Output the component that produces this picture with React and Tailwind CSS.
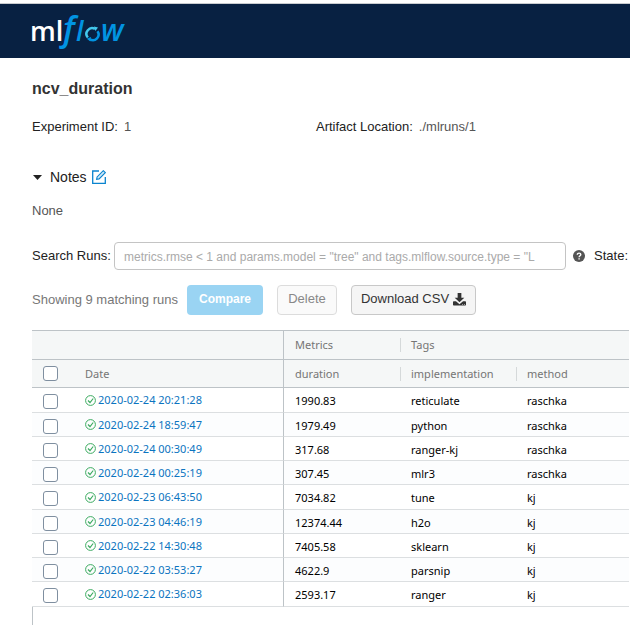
import React from "react";

const runs = [
  ["2020-02-24 20:21:28", "1990.83", "reticulate", "raschka"],
  ["2020-02-24 18:59:47", "1979.49", "python", "raschka"],
  ["2020-02-24 00:30:49", "317.68", "ranger-kj", "raschka"],
  ["2020-02-24 00:25:19", "307.45", "mlr3", "raschka"],
  ["2020-02-23 06:43:50", "7034.82", "tune", "kj"],
  ["2020-02-23 04:46:19", "12374.44", "h2o", "kj"],
  ["2020-02-22 14:30:48", "7405.58", "sklearn", "kj"],
  ["2020-02-22 03:53:27", "4622.9", "parsnip", "kj"],
  ["2020-02-22 02:36:03", "2593.17", "ranger", "kj"],
];

function Logo() {
  return (
    <svg width="110" height="54" viewBox="0 0 110 54" role="img" aria-label="mlflow">
      <g fontFamily="'Open Sans', sans-serif">
        <text x="0" y="37" fontSize="27" fontWeight="600" fill="#fff">ml</text>
        <g fontStyle="italic" fill="#0194e2" fontWeight="600">
          <text x="33" y="37" fontSize="34">f</text>
          <text x="46" y="37" fontSize="27">l</text>
          <text x="71" y="37" fontSize="30">w</text>
        </g>
      </g>
      <g fill="none" strokeWidth="2.5">
        <path d="M57.8 33.500A5.700 5.700 0 0 1 65 24.900" stroke="#43c9ed" />
        <path d="M67.500 27.200A5.700 5.700 0 0 1 60 35.400" stroke="#0194e2" />
      </g>
      <path d="M64 22.500l4 1-2.600 3.600z" fill="#43c9ed" />
      <path d="M61 33l-.6 4.500-3.600-2.800z" fill="#0194e2" />
    </svg>
  );
}

function CheckCircle() {
  return (
    <svg className="shrink-0" width="11" height="11" viewBox="0 0 11 11" fill="none" stroke="#3caa60" aria-hidden="true">
      <circle cx="5.500" cy="5.500" r="4.900" />
      <path d="M3 5.500l2 2 3.200-4" strokeWidth="1.200" />
    </svg>
  );
}

function EditIcon() {
  return (
    <svg width="14" height="14" viewBox="0 0 14 14" fill="none" stroke="#0a84cf" aria-hidden="true">
      <path d="M7 1H.7v12.300h12.600V7" strokeWidth="1.300" />
      <path d="M4.600 9.400l.5-2.500 6.200-6.200 2 2-6.200 6.200z" fill="#cfe9f8" strokeWidth="1.100" />
    </svg>
  );
}

function DownloadIcon() {
  return (
    <svg width="13" height="13" viewBox="0 0 14 14" fill="#333" aria-hidden="true">
      <path d="M5 0h4v5h3.200L7 10 1.800 5H5z" />
      <path d="M.8 9h2.400L7 12 10.800 9h2.400q.8 0 .8.8v2.900q0 .8-.8.8H.8q-.8 0-.8-.8V9.800Q0 9 .8 9z" />
      <path d="M10 11.800h.8v.8H10zM12 11.800h.8v.8H12z" fill="#f5f5f5" />
    </svg>
  );
}

function HelpIcon() {
  return (
    <svg className="shrink-0" width="12" height="12" viewBox="0 0 12 12" role="img" aria-label="Search help">
      <circle cx="6" cy="6" r="6" fill="#555" />
      <path d="M4.300 4.700C4.300 2.500 7.800 2.700 7.800 4.600 7.800 5.800 6.100 5.800 6.100 7.200" fill="none" stroke="#fff" strokeWidth="1.400" />
      <path d="M5.400 8.200h1.400v1.400H5.400z" fill="#fff" />
    </svg>
  );
}

function Tick({ label }) {
  return (
    <input
      type="checkbox"
      aria-label={label}
      className="block size-[15px] appearance-none rounded-[3px] border border-[#7f8fa0] bg-white checked:bg-[#0b83cd]"
    />
  );
}

function GroupHeading({ children, divided, ...rest }) {
  return (
    <th className="p-0 text-left font-normal" {...rest}>
      <div className={divided ? "border-l border-[#d5d9da] pl-[10px] leading-[14px]" : "pl-[11px] leading-[14px]"}>
        {children}
      </div>
    </th>
  );
}

export default function App() {
  return (
    <div className="h-screen overflow-hidden bg-white font-['Liberation_Sans',Arial,sans-serif] text-[13px] leading-[18px] text-[#333]">
      <header className="mt-[3px] border-t border-[#c9ccd0] bg-[#082142] pl-[30px]">
        <a href="#home" className="flex h-[54px] items-center">
          <Logo />
        </a>
      </header>

      <main className="pl-8">
        <h1 className="pt-5 text-[16px] leading-[22px] font-bold">ncv_duration</h1>

        <dl className="grid grid-cols-[284px_1fr] pt-[18px]">
          <div className="flex gap-[6px]">
            <dt className="text-[#222]">Experiment ID:</dt>
            <dd className="text-[#555]">1</dd>
          </div>
          <div className="flex gap-[6px]">
            <dt className="text-[#222]">Artifact Location:</dt>
            <dd className="text-[#555]">./mlruns/1</dd>
          </div>
        </dl>

        <section className="pt-[31px]">
          <h2 className="flex items-center text-[14px] leading-[20px] text-[#222]">
            <button type="button" className="flex items-center gap-2 pl-px">
              <svg width="9" height="5" viewBox="0 0 9 5" aria-hidden="true">
                <path d="M0 0h9L4.500 5z" fill="#222" />
              </svg>
              Notes
            </button>
            <a href="#edit" aria-label="Edit notes" className="ml-[5px]">
              <EditIcon />
            </a>
          </h2>
          <p className="pt-[15px] text-[#555]">None</p>
        </section>

        <div className="flex items-center overflow-hidden pt-[22px] whitespace-nowrap">
          <label htmlFor="search" className="w-[82px] shrink-0 text-[#222]">Search Runs:</label>
          <input
            id="search"
            type="text"
            placeholder={'metrics.rmse < 1 and params.model = "tree" and tags.mlflow.source.type = "L'}
            className="h-[28px] min-w-0 flex-1 rounded-[4px] border border-[#c4c4c4] px-[9px] placeholder:text-[12px] placeholder:text-[#aaa]"
          />
          <span className="ml-[7px]"><HelpIcon /></span>
          <span className="mr-[2px] ml-[9px] text-[#222]">State:</span>
        </div>

        <div className="flex items-center pt-[15px] whitespace-nowrap">
          <span className="w-[155px] text-[#777]">Showing 9 matching runs</span>
          <button type="button" disabled className="h-[30px] w-[76px] rounded-[4px] bg-[#9ad4f3] pb-[2px] text-[12px] font-bold text-white">
            Compare
          </button>
          <button type="button" disabled className="ml-[14px] h-[30px] w-[60px] rounded-[4px] border border-[#dcdcdc] bg-[#fafafa] pb-[2px] text-[#888]">
            Delete
          </button>
          <button type="button" className="ml-[14px] flex h-[30px] w-[125px] items-center justify-center gap-1 rounded-[4px] border border-[#c8c8c8] bg-[#f5f5f5] pb-[2px] text-[#333]">
            Download CSV <DownloadIcon />
          </button>
        </div>

        <div className="mt-[15px] h-[300px] border-l border-[#bdc3c7] font-['Noto_Sans','Open_Sans',sans-serif] text-[11px] leading-[14px]">
          <table className="-ml-px w-full table-fixed border-separate border-spacing-0">
            <colgroup>
              <col className="w-[53px]" />
              <col className="w-[199px]" />
              <col className="w-[116px]" />
              <col className="w-[116px]" />
              <col />
            </colgroup>
            <thead className="bg-[#f5f7f7] text-[#757575]">
              <tr className="h-[29px] [&>*]:border-t [&>*]:border-[#bdc3c7]">
                <td colSpan={2} className="border-r p-0" />
                <GroupHeading>Metrics</GroupHeading>
                <GroupHeading divided colSpan={2}>Tags</GroupHeading>
              </tr>
              <tr className="h-[29px] [&>*]:border-y [&>*]:border-[#bdc3c7]">
                <th className="py-0 pr-0 pl-[11px]"><Tick label="Select all runs" /></th>
                <th className="border-r p-0 text-left font-normal">Date</th>
                <GroupHeading>duration</GroupHeading>
                <GroupHeading divided>implementation</GroupHeading>
                <GroupHeading divided>method</GroupHeading>
              </tr>
            </thead>
            <tbody className="text-black">
              {runs.map(([date, duration, implementation, method]) => (
                <tr key={date} className="h-[24px] bg-white even:bg-[#fcfdfe] nth-[4n+1]:h-[25px] [&>td]:border-b [&>td]:border-b-[#dcdfe1]">
                  <td className="pt-[3px] pr-0 pb-0 pl-[11px]"><Tick label={"Select run " + date} /></td>
                  <td className="border-r border-r-[#bdc3c7] p-0">
                    <a href="#run" className="flex items-center gap-[2px] text-[#0b74c0]">
                      <CheckCircle />
                      {date}
                    </a>
                  </td>
                  <td className="pt-[2px] pr-0 pb-0 pl-[11px]">{duration}</td>
                  <td className="pt-[2px] pr-0 pb-0 pl-[11px]">{implementation}</td>
                  <td className="pt-[2px] pr-0 pb-0 pl-[11px]">{method}</td>
                </tr>
              ))}
            </tbody>
          </table>
        </div>
      </main>
    </div>
  );
}
